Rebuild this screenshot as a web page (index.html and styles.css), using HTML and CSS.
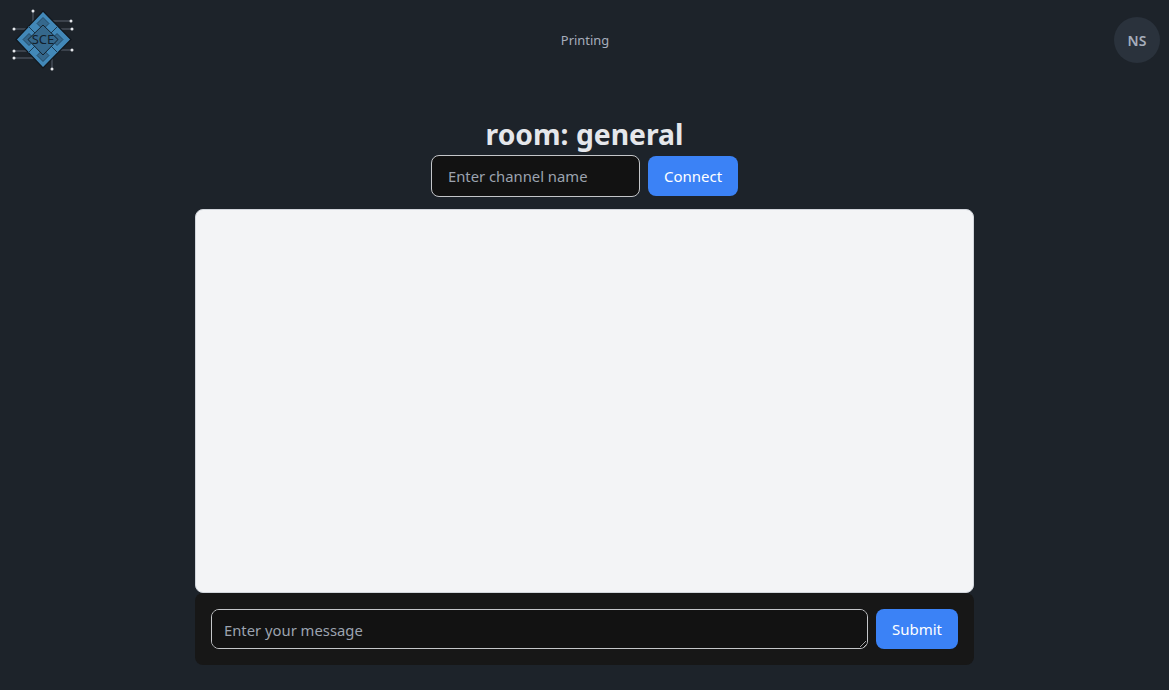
FILE: index.html
```html
<!DOCTYPE html>
<html lang="en">
<head>
<meta charset="utf-8">
<title>Printing</title>
<link rel="stylesheet" href="styles.css">
</head>
<body>
<header class="navbar">
  <svg class="logo" viewBox="0 0 64 64" width="64" height="64" aria-label="SCE logo">
    <path class="traces" d="M22 3V15M3 21H17M3 43H17M3 50H23M60 13H41M61 21H49M61 42H49M41 61V50"/>
    <g class="pins">
      <circle cx="22" cy="3" r="1.5"/><circle cx="3" cy="21" r="1.5"/><circle cx="3" cy="43" r="1.5"/><circle cx="3" cy="50" r="1.5"/>
      <circle cx="60" cy="13" r="1.5"/><circle cx="61" cy="21" r="1.5"/><circle cx="61" cy="42" r="1.5"/><circle cx="41" cy="61" r="1.5"/>
    </g>
    <path class="outer" d="M32 3L60 31.5L32 60L5 31.5Z"/>
    <path class="cell" d="M32 9.500L38 15.500L32 21.500L26 15.500Z"/>
    <path class="cell" d="M32 41.500L38 47.500L32 53.500L26 47.500Z"/>
    <path class="cell" d="M12 31.500L18 25.500L24 31.500L18 37.500Z"/>
    <path class="cell" d="M40 31.500L46 25.500L52 31.500L46 37.500Z"/>
    <path class="grid" d="M17 18L24 25M47 18L40 25M17 45L24 38M47 45L40 38"/>
    <path class="inner" d="M32 17L47 31.500L32 47L17 31.500Z"/>
    <text class="logo-text" x="32" y="36">SCE</text>
  </svg>
  <a class="nav-link">Printing</a>
  <div class="avatar">NS</div>
</header>
<main class="room">
  <h1 class="room-title">room: general</h1>
  <form class="channel-form">
    <input class="channel-input" type="text" placeholder="Enter channel name">
    <button class="btn btn-connect" type="button">Connect</button>
  </form>
  <div class="messages"></div>
  <form class="composer">
    <textarea class="message-input" placeholder="Enter your message"></textarea>
    <button class="btn btn-submit" type="button">Submit</button>
  </form>
</main>
</body>
</html>
```
FILE: styles.css
```css
* { box-sizing: border-box; }
html, body { margin: 0; height: 100%; overflow: hidden; }
body {
  background: #1d232a;
  color: #a6adbb;
  font-family: "Noto Sans", "Open Sans", sans-serif;
}
.navbar {
  height: 80px;
  padding: 0 9px 0 11px;
  display: grid;
  grid-template-columns: 1fr auto 1fr;
  align-items: center;
}
.logo { display: block; justify-self: start; }
.traces { fill: none; stroke: #6b7280; stroke-width: 0.8; }
.pins circle { fill: #e5e7eb; }
.outer { fill: #4288b8; stroke: #10161c; stroke-width: 1.2; }
.cell { fill: #35688d; stroke: #1b3a52; stroke-width: 0.7; }
.inner { fill: #35688d; stroke: #14222e; stroke-width: 1; }
.grid { fill: none; stroke: #1b3a52; stroke-width: 1; }
.logo-text { font-size: 13px; fill: #12202c; text-anchor: middle; font-family: "Noto Sans", sans-serif; }
.nav-link { font-size: 12.900px; line-height: 20px; margin-left: -1px; }
.avatar {
  justify-self: end;
  width: 46px;
  height: 46px;
  border-radius: 50%;
  background: #2a323c;
  display: flex;
  align-items: center;
  justify-content: center;
  font-size: 14px;
  font-weight: 600;
}
.room {
  display: flex;
  flex-direction: column;
  align-items: center;
  padding-top: 35px;
}
.room-title {
  margin: 0;
  font-size: 28.3px;
  line-height: 38px;
  font-weight: 700;
  color: #e5e7eb;
}
.channel-form {
  display: flex;
  align-items: center;
  gap: 8px;
  margin-top: 2px;
}
.channel-input {
  width: 209px;
  height: 42px;
  padding: 0 16px;
  background: #121212;
  border: 1px solid #c4c6c9;
  border-radius: 8px;
  color: #a6adbb;
  font: inherit;
  font-size: 14.8px;
  outline: none;
}
.channel-input::placeholder, .message-input::placeholder { color: #9ca3af; opacity: 1; }
.btn {
  border: 0;
  background: #3b82f6;
  color: #fff;
  font: inherit;
  font-size: 15px;
  border-radius: 8px;
  padding: 0;
}
.btn-connect { width: 90px; height: 40px; }
.btn-submit { width: 82px; height: 40px; flex: none; }
.messages {
  width: 779px;
  height: 384px;
  margin-top: 12px;
  background: #f3f4f6;
  border: 1px solid #d1d5db;
  border-radius: 8px;
}
.composer {
  width: 779px;
  height: 72px;
  padding: 16px;
  display: flex;
  gap: 8px;
  background: #171717;
  border-radius: 8px;
}
.message-input {
  flex: 1;
  height: 40px;
  padding: 8px 12px;
  background: #121212;
  border: 1px solid #c4c6c9;
  border-radius: 8px;
  color: #a6adbb;
  font: inherit;
  font-size: 14.8px;
  line-height: 24px;
  outline: none;
  display: block;
}
```
